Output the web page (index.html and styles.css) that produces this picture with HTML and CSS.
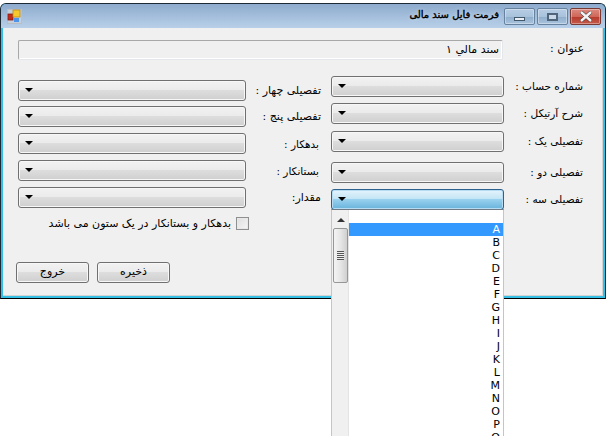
FILE: index.html
```html
<!DOCTYPE html>
<html lang="fa">
<head>
  <meta charset="UTF-8" />
  <title>فرمت فایل سند مالی</title>
  <link rel="stylesheet" href="styles.css">
</head>
<body>
  <div class="window">
    <div class="titlebar">
      <svg class="app-icon" width="15" height="15" viewBox="0 0 15 15">
        <rect x="0.5" y="0.5" width="14" height="14" fill="#c4cfdc" stroke="#b9bec4" />
        <rect x="1" y="5" width="5" height="6" fill="#c22a1c" stroke="#8a1a10" stroke-width="0.8" />
        <rect x="6" y="1" width="7" height="7" fill="#f5c92e" stroke="#c08a10" stroke-width="0.8" />
        <rect x="7" y="9" width="5" height="4" fill="#4d94ea" />
      </svg>
      <div class="title-text">فرمت فایل سند مالی</div>
      <div class="capbtn"><span class="min-glyph"></span></div>
      <div class="capbtn"><span class="max-glyph"></span></div>
      <div class="capbtn close">
        <svg width="16" height="11" viewBox="0 0 16 11">
          <path d="M3 1 L13 10 M13 1 L3 10" stroke="#3a3a3a" stroke-width="3.6" />
          <path d="M3 1 L13 10 M13 1 L3 10" stroke="#f4f4f4" stroke-width="2.4" />
        </svg>
      </div>
    </div>

    <div class="client">
      <div class="title-row">
        <div class="textbox">سند مالي ۱</div>
        <div class="label title-label">عنوان :</div>
      </div>

      <div class="columns">
        <div class="col-left">
          <div class="row">
            <div class="combo"><i class="arrow"></i></div>
            <div class="label">تفصیلی چهار :</div>
          </div>
          <div class="row gap5">
            <div class="combo"><i class="arrow"></i></div>
            <div class="label">تفصیلی پنج :</div>
          </div>
          <div class="row gap6">
            <div class="combo"><i class="arrow"></i></div>
            <div class="label inset2">بدهکار :</div>
          </div>
          <div class="row gap6">
            <div class="combo"><i class="arrow"></i></div>
            <div class="label inset2">بستانکار :</div>
          </div>
          <div class="row gap6">
            <div class="combo"><i class="arrow"></i></div>
            <div class="label">مقدار:</div>
          </div>
          <div class="check-row">
            <span class="check-text">بدهکار و بستانکار در یک ستون می باشد</span>
            <span class="checkbox"></span>
          </div>
          <div class="button-row">
            <div class="button">خروج</div>
            <div class="button">ذخیره</div>
          </div>
        </div>

        <div class="col-right">
          <div class="row">
            <div class="combo"><i class="arrow"></i></div>
            <div class="label">شماره حساب :</div>
          </div>
          <div class="row gap6">
            <div class="combo"><i class="arrow"></i></div>
            <div class="label">شرح آرتیکل :</div>
          </div>
          <div class="row gap7">
            <div class="combo"><i class="arrow"></i></div>
            <div class="label">تفصیلی یک :</div>
          </div>
          <div class="row gap10">
            <div class="combo"><i class="arrow"></i></div>
            <div class="label">تفصیلی دو :</div>
          </div>
          <div class="row gap6">
            <div class="combo focused"><i class="arrow"></i></div>
            <div class="label">تفصیلی سه :</div>
          </div>
        </div>
      </div>
    </div>
  </div>

  <div class="dropdown">
    <div class="scrollbar">
      <i class="arrow-up"></i>
      <div class="thumb"><span class="grip"></span></div>
    </div>
    <div class="list">
      <div class="item selected">A</div>
      <div class="item">B</div>
      <div class="item">C</div>
      <div class="item">D</div>
      <div class="item">E</div>
      <div class="item">F</div>
      <div class="item">G</div>
      <div class="item">H</div>
      <div class="item">I</div>
      <div class="item">J</div>
      <div class="item">K</div>
      <div class="item">L</div>
      <div class="item">M</div>
      <div class="item">N</div>
      <div class="item">O</div>
      <div class="item">P</div>
      <div class="item">Q</div>
    </div>
  </div>
</body>
</html>
```

FILE: styles.css
```css
* {
  margin: 0;
  padding: 0;
  box-sizing: border-box;
}

html, body {
  height: 436px;
  overflow: hidden;
}

body {
  background: #fff;
  font-family: "DejaVu Sans", sans-serif;
  font-size: 11px;
  color: #000;
}

.window {
  margin-top: 3px;
  height: 296px;
  background: #35bfe4;
  border: 1px solid #1c2a36;
  border-bottom-color: #000;
  border-radius: 6px 6px 0 0;
  padding: 0 2px 2px 2px;
  display: flex;
  flex-direction: column;
}

/* title bar */
.titlebar {
  height: 24px;
  display: flex;
  align-items: flex-start;
  background: linear-gradient(#8eabcd, #b8d0e9);
  margin: 0 -2px;
  padding: 4px 4px 0 6px;
  border-radius: 5px 5px 0 0;
}

.app-icon {
  margin-top: 1px;
}

.title-text {
  flex: 1;
  text-align: right;
  direction: rtl;
  font-size: 10px;
  -webkit-text-stroke: 0.4px #000;
  padding: 1px 3px 0 0;
  text-shadow: 0 0 4px #dbe8f5;
}

.capbtn {
  width: 31px;
  height: 17px;
  margin-left: 2px;
  border: 1px solid #66829f;
  border-radius: 2px;
  background: linear-gradient(#b6cde4 0, #a9c2dc 50%, #8fadcc 51%, #a8c3dd 100%);
  box-shadow: inset 0 0 0 1px rgba(255, 255, 255, 0.35);
  display: flex;
  align-items: center;
  justify-content: center;
}

.capbtn.close {
  border-color: #7a3a34;
  background: linear-gradient(#dc8b80 0, #d0675a 50%, #b5392b 51%, #c45a4a 100%);
}

.min-glyph {
  width: 11px;
  height: 4px;
  margin-top: 4px;
  background: #e8eef4;
  border: 1px solid #44586c;
}

.max-glyph {
  width: 11px;
  height: 8px;
  border: 2px solid #50657a;
  background: #c9d8e8;
}

/* client area */
.client {
  flex: 1;
  background: #f0f0f0;
  padding: 12px 0 0 15px;
  box-shadow: inset -1px -1px 0 #d4d4d4;
}

.title-row {
  display: flex;
  height: 20px;
}

.textbox {
  width: 485px;
  height: 20px;
  background: #f0f0f0;
  border: 1px solid #e3e6ea;
  border-top-color: #a8a8a8;
  border-left-color: #a8a8a8;
  border-radius: 2px;
  direction: rtl;
  padding: 2px 3px 0 0;
  box-shadow: inset -1px -1px 0 #fff;
}

.label {
  direction: rtl;
  white-space: nowrap;
  text-align: right;
}

.title-label {
  width: 81px;
  padding-top: 2px;
}

.columns {
  display: flex;
}

.col-left {
  width: 313px;
  padding-top: 20px;
}

.col-right {
  width: 270px;
  padding-top: 16px;
}

.row {
  display: flex;
  height: 21px;
  align-items: center;
}

.gap5 { margin-top: 5px; }
.gap6 { margin-top: 6px; }
.gap7 { margin-top: 7px; }
.gap10 { margin-top: 10px; }

.col-left .combo {
  width: 228px;
}

.col-left .label {
  width: 75px;
}

.col-left .label.inset2 {
  padding-right: 2px;
  font-size: 10.5px;
}

.col-right .combo {
  width: 173px;
}

.col-right .label {
  width: 82px;
  padding: 0 3px 2px 0;
  font-size: 10.5px;
}

.combo {
  flex: none;
  height: 21px;
  border: 1px solid #707070;
  border-radius: 3px;
  background: linear-gradient(#f2f2f2 0, #ebebeb 45%, #dddddd 50%, #cfcfcf 100%);
  box-shadow: inset 0 0 0 1px #f7f7f7;
  padding: 7px 0 0 6px;
}

.combo.focused {
  border-color: #2c628b;
  background: linear-gradient(#e5f4fc 0, #c4e5f6 45%, #98d1ef 50%, #68b3db 100%);
  box-shadow: inset 0 0 0 1px #b5dcf2;
}

.arrow {
  display: block;
  width: 0;
  height: 0;
  border-left: 4px solid transparent;
  border-right: 4px solid transparent;
  border-top: 4px solid #000;
}

/* checkbox line */
.check-row {
  display: flex;
  justify-content: flex-end;
  align-items: center;
  gap: 5px;
  width: 231px;
  height: 13px;
  margin-top: 9px;
}

.check-text {
  direction: rtl;
  white-space: nowrap;
}

.checkbox {
  flex: none;
  width: 13px;
  height: 13px;
  border: 1px solid #8e8f8f;
  background: linear-gradient(135deg, #dedede, #f6f6f6);
  box-shadow: inset 0 0 0 1px #e8e8e8;
}

.button-row {
  display: flex;
  gap: 8px;
  margin: 32px 0 0 -2px;
}

.button {
  width: 73px;
  height: 21px;
  border: 1px solid #707070;
  border-radius: 3px;
  background: linear-gradient(#f2f2f2 0, #ebebeb 45%, #dddddd 50%, #cfcfcf 100%);
  box-shadow: inset 0 0 0 1px #f7f7f7;
  text-align: center;
  line-height: 18px;
  direction: rtl;
}

/* open combo list, hangs below the window */
.dropdown {
  position: absolute;
  left: 331px;
  top: 209px;
  width: 173px;
  height: 227px;
  background: #fff;
  border: 1px solid #c4c4d0;
  border-top-color: #6f7a84;
  border-bottom: 0;
  display: flex;
}

.scrollbar {
  position: relative;
  flex: none;
  width: 17px;
  background: #f0f0f0;
  border-right: 1px solid #e4e4e4;
}

.arrow-up {
  position: absolute;
  left: 5px;
  top: 8px;
  width: 0;
  height: 0;
  border-left: 4px solid transparent;
  border-right: 4px solid transparent;
  border-bottom: 4px solid #333;
}

.thumb {
  position: absolute;
  left: 1px;
  top: 18px;
  width: 15px;
  height: 55px;
  border: 1px solid #979797;
  border-radius: 2px;
  background: linear-gradient(90deg, #f4f4f4, #e6e6e6 50%, #cfcfcf);
  display: flex;
  align-items: center;
  justify-content: center;
}

.grip {
  display: block;
  width: 7px;
  height: 9px;
  background: repeating-linear-gradient(#555 0, #555 1px, #eee 1px, #eee 2px);
}

.list {
  flex: 1;
  padding-top: 13px;
}

.item {
  height: 13px;
  line-height: 12px;
  padding-top: 1px;
  padding-right: 3px;
  text-align: right;
  font-size: 11px;
}

.item.selected {
  background: #3399ff;
  color: #fff;
}
```
